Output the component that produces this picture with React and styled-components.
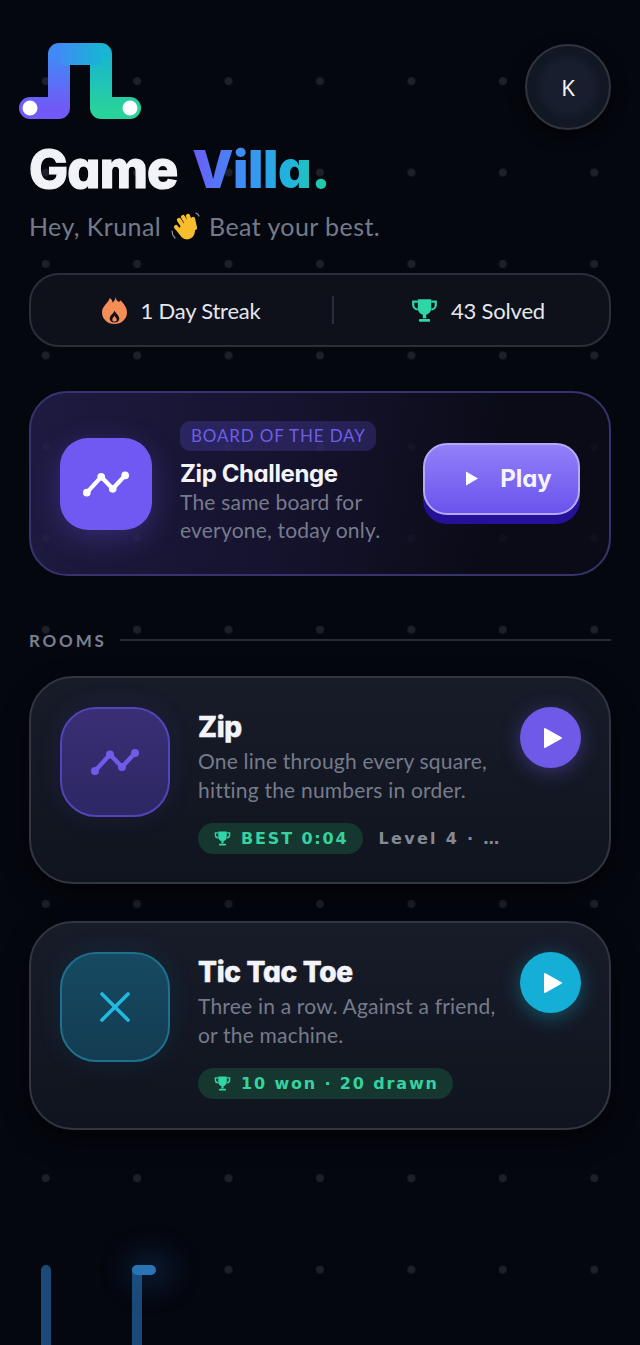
import styled, { createGlobalStyle } from "styled-components";

const GlobalStyle = createGlobalStyle`
  html, body {
    margin: 0;
    padding: 0;
    background: #05070f;
  }
  * {
    box-sizing: border-box;
  }
`;

const BODY_FONT = `Lato, "Noto Sans", sans-serif`;
const HEAD_FONT = `Inter, "Noto Sans", sans-serif`;

const Page = styled.div`
  position: relative;
  width: 640px;
  height: 1345px;
  overflow: hidden;
  padding: 43px 29px 0;
  font-family: ${BODY_FONT};
  background-color: #05070f;
  background-image: radial-gradient(circle, #1d2029 0, #1d2029 3.5px, transparent 4.5px);
  background-size: 91.43px 91.43px;
  background-position: 0 -56px;
`;

const Header = styled.header`
  display: flex;
  justify-content: space-between;
  align-items: flex-start;
  height: 98px;
`;

const Logo = styled.svg`
  display: block;
  width: 124px;
  height: 78px;
  margin-left: -11px;
`;

const Avatar = styled.div`
  display: flex;
  align-items: center;
  justify-content: center;
  width: 86px;
  height: 86px;
  margin-top: 1px;
  border-radius: 50%;
  border: 2px solid #30343f;
  background: radial-gradient(circle, #181e2d 0, #181e2d 24px, #121724 34px);
  box-shadow: 0 6px 16px rgba(0, 0, 0, 0.6);
  color: #f2f4f8;
  font-size: 22px;
  font-family: "Noto Sans", sans-serif;
`;

const Title = styled.h1`
  margin: 0;
  height: 58px;
  font-family: ${HEAD_FONT};
  font-size: 52px;
  line-height: 58px;
  font-weight: 800;
  letter-spacing: -0.8px;
  font-feature-settings: "cv11";
  -webkit-text-stroke: 1.2px currentColor;
  color: #f1f3f8;
`;

const TitleAccent = styled.span`
  margin-left: 4px;
  background: linear-gradient(90deg, #6c5cf6 0%, #3f8cf5 35%, #1fb4dc 70%, #22cfa0 100%);
  -webkit-background-clip: text;
  background-clip: text;
  color: transparent;
  font-weight: 900;
  letter-spacing: -0.4px;
  -webkit-text-stroke: 0;
`;

const Greeting = styled.p`
  display: flex;
  align-items: center;
  gap: 9px;
  height: 36px;
  margin: 9px 0 0;
  font-size: 25px;
  letter-spacing: 0.42px;
  color: #747a8a;
`;

const Stats = styled.section`
  display: grid;
  grid-template-columns: 301px 2px 1fr;
  align-items: center;
  height: 74px;
  margin-top: 29px;
  border-radius: 30px;
  border: 2px solid #2b2f3a;
  background: #0e111a;
`;

const Stat = styled.div`
  display: flex;
  align-items: center;
  justify-content: center;
  gap: 13px;
  padding-left: ${(p) => p.$shift || 0}px;
  font-size: 22px;
  letter-spacing: -0.2px;
  color: #e4e7ee;
`;

const StatDivider = styled.div`
  width: 2px;
  height: 28px;
  background: #2b2f3a;
`;

const Daily = styled.section`
  display: flex;
  align-items: center;
  height: 185px;
  margin-top: 44px;
  padding: 0 29px;
  border-radius: 38px;
  border: 2px solid #38336f;
  background: linear-gradient(100deg, rgba(36, 31, 78, 0.8) 0%, rgba(24, 21, 50, 0.78) 50%, rgba(11, 12, 24, 0.8) 80%);
`;

const DailyTile = styled.div`
  display: flex;
  align-items: center;
  justify-content: center;
  flex: none;
  width: 92px;
  height: 92px;
  border-radius: 28px;
  background: #7059f2;
  box-shadow: 0 8px 30px rgba(112, 89, 242, 0.3);
`;

const DailyBody = styled.div`
  flex: 1;
  min-width: 0;
  margin: 0 0 2px 28px;
`;

const Badge = styled.div`
  width: fit-content;
  height: 30px;
  padding: 0 10px 0 11px;
  border-radius: 10px;
  background: rgba(108, 92, 246, 0.22);
  color: #6d5ee8;
  font-size: 17px;
  line-height: 30px;
  letter-spacing: 0.85px;
  white-space: nowrap;
`;

const DailyTitle = styled.h2`
  margin: 5px 0 -4px;
  font-family: ${HEAD_FONT};
  font-size: 24px;
  line-height: 36px;
  font-weight: 700;
  letter-spacing: -0.4px;
  font-feature-settings: "cv11";
  color: #f3f4fa;
  white-space: nowrap;
`;

const Desc = styled.p`
  margin: 0;
  font-size: 21px;
  line-height: 28.5px;
  letter-spacing: 0.2px;
  color: #767b8c;
  white-space: nowrap;
`;

const PlayButton = styled.button`
  display: flex;
  align-items: center;
  justify-content: center;
  gap: 21px;
  flex: none;
  width: 157px;
  height: 72px;
  padding: 0 0 0 14px;
  margin-top: -10px;
  border: 2px solid #b5a7fb;
  border-radius: 24px;
  background: linear-gradient(180deg, #9180f8 0%, #6a54ee 100%);
  box-shadow: 0 9px 0 #25109a;
  color: #f6f5ff;
  font-family: ${HEAD_FONT};
  font-size: 24px;
  font-weight: 700;
  font-feature-settings: "cv11";
`;

const Triangle = styled.svg`
  display: block;
  flex: none;
  fill: #fff;
`;

const SectionHead = styled.div`
  display: flex;
  align-items: center;
  gap: 13px;
  height: 24px;
  margin-top: 52px;
  color: #7a8090;
  font-size: 17px;
  font-weight: 700;
  letter-spacing: 2.8px;
`;

const SectionLine = styled.div`
  flex: 1;
  height: 2px;
  background: #272b37;
`;

const RoomList = styled.div`
  display: flex;
  flex-direction: column;
  gap: 37px;
  margin-top: 24px;
`;

const Room = styled.article`
  display: flex;
  align-items: flex-start;
  height: ${(p) => p.$height}px;
  padding: 29px 28px 0 29px;
  border-radius: 44px;
  border: 2px solid #323641;
  background: linear-gradient(180deg, #181c29 0%, #10141e 100%);
  box-shadow: 0 10px 24px rgba(0, 0, 0, 0.55);
`;

const RoomTile = styled.div`
  display: flex;
  align-items: center;
  justify-content: center;
  flex: none;
  width: 110px;
  height: 110px;
  border-radius: 36px;
  border: 2px solid ${(p) => p.$border};
  background: ${(p) => p.$bg};
  box-shadow: 0 0 26px ${(p) => p.$glow};
`;

const RoomBody = styled.div`
  flex: 1;
  min-width: 0;
  margin-left: 28px;
`;

const RoomTitle = styled.h3`
  margin: 0;
  font-family: ${HEAD_FONT};
  font-size: 28px;
  line-height: 40px;
  font-weight: 800;
  letter-spacing: -0.3px;
  font-feature-settings: "cv11";
  -webkit-text-stroke: 0.5px currentColor;
  color: #f3f4fa;
`;

const RoomMeta = styled.div`
  display: flex;
  align-items: center;
  gap: 16px;
  margin-top: 19px;
`;

const Pill = styled.div`
  display: inline-flex;
  align-items: center;
  gap: 10px;
  height: 31px;
  padding: 0 14px 0 16px;
  border-radius: 16px;
  background: #15372f;
  color: #34d3a0;
  font-family: "DejaVu Sans", sans-serif;
  font-size: 16px;
  font-weight: 700;
  letter-spacing: 1.85px;
  white-space: nowrap;
`;

const Level = styled.span`
  color: #848a99;
  font-family: "DejaVu Sans", sans-serif;
  font-size: 16px;
  font-weight: 700;
  letter-spacing: 2.3px;
  white-space: nowrap;
`;

const RoomPlay = styled.button`
  display: flex;
  align-items: center;
  justify-content: center;
  flex: none;
  width: 61px;
  height: 61px;
  padding: 0 0 0 4px;
  border: none;
  border-radius: 50%;
  background: ${(p) => p.$color};
  box-shadow: 0 4px 20px ${(p) => p.$glow};
`;

const Rail = styled.div`
  position: absolute;
  bottom: 0;
  left: ${(p) => p.$left}px;
  top: 1265px;
  width: 10px;
  border-radius: 5px 5px 0 0;
  background: #1b4a78;
`;

const RailHead = styled.div`
  position: absolute;
  left: 132px;
  top: 1265px;
  width: 24px;
  height: 10px;
  border-radius: 5px;
  background: #2a74b6;
  box-shadow: 6px 0 30px 10px rgba(30, 110, 190, 0.26);
`;

const ZigZag = ({ size, color }) => (
  <svg width={size} height={size} viewBox="0 0 48 48" fill="none">
    <polyline
      points="4,33 19,16.5 31,29 44,15"
      stroke={color}
      strokeWidth="4.4"
      strokeLinejoin="round"
      strokeLinecap="round"
    />
    <circle cx="4" cy="33" r="4" fill={color} />
    <circle cx="19" cy="16.5" r="4" fill={color} />
    <circle cx="31" cy="29" r="4" fill={color} />
    <circle cx="44" cy="15" r="4" fill={color} />
  </svg>
);

const Trophy = ({ size, color }) => (
  <svg width={size} height={size} viewBox="0 0 24 24" fill="none">
    <path d="M6 2h12v8a6 6 0 0 1-12 0z" fill={color} />
    <path d="M6 4H2v3a4 4 0 0 0 4 4M18 4h4v3a4 4 0 0 1-4 4" stroke={color} strokeWidth="2" />
    <path d="M10.5 15h3v4h-3z" fill={color} />
    <rect x="7" y="19.5" width="10" height="2.5" rx="1" fill={color} />
  </svg>
);

const Flame = () => (
  <svg width="25" height="27" viewBox="0 0 26 28">
    <path
      d="M14 0c1 4 3 6 5 4 0-1 0-1 0-1 4 4 7 8 7 13 0 7-6 12-13 12S0 23 0 16C0 9 7 6 8 1c2 1 3 3 3 5 2-2 3-4 3-6z"
      fill="#f58d57"
    />
    <path d="M13 14c1 3 5 5 5 8.500 0 2.500-2 4-5 4s-5-1.500-5-4c0-3.500 4-5 5-8.500z" fill="#141018" />
    <path d="M13 19.500c.7 1.500 2.300 2.500 2.300 4 0 1.200-1 2-2.300 2s-2.300-.8-2.300-2c0-1.500 1.600-2.500 2.300-4z" fill="#f58d57" />
  </svg>
);

const Wave = () => (
  <svg width="30" height="30" viewBox="0 0 30 30" fill="none">
    <g stroke="#f8bd2d" strokeWidth="4.200" strokeLinecap="round">
      <path d="M9 9l6 9M13 6l6 10M18 5l4 11M23 8l2 9M6 16l5 6" />
    </g>
    <ellipse cx="17" cy="20" rx="8" ry="8.500" fill="#f8bd2d" />
    <path d="M2 20q0 4 3 7M26 2q2 1 3 3" stroke="#8d92a0" strokeWidth="1.200" strokeLinecap="round" />
  </svg>
);

const App = () => {
  return (
    <>
      <GlobalStyle />
      <Page>
        <Header>
          <Logo viewBox="0 0 124 78" fill="none">
            <defs>
              <linearGradient id="logoLeft" gradientUnits="userSpaceOnUse" x1="0" y1="66" x2="0" y2="10">
                <stop offset="0" stopColor="#7059f6" />
                <stop offset="1" stopColor="#3f8cf6" />
              </linearGradient>
              <linearGradient id="logoTop" gradientUnits="userSpaceOnUse" x1="41" y1="0" x2="83" y2="0">
                <stop offset="0" stopColor="#3f8cf6" />
                <stop offset="1" stopColor="#18b4d4" />
              </linearGradient>
              <linearGradient id="logoRight" gradientUnits="userSpaceOnUse" x1="0" y1="10" x2="0" y2="66">
                <stop offset="0" stopColor="#18b4d4" />
                <stop offset="1" stopColor="#27d29c" />
              </linearGradient>
            </defs>
            <path d="M12 65H41V11" stroke="url(#logoLeft)" strokeWidth="22" strokeLinecap="round" strokeLinejoin="round" />
            <path d="M83 11V65H112" stroke="url(#logoRight)" strokeWidth="22" strokeLinecap="round" strokeLinejoin="round" />
            <path d="M41 11H83" stroke="url(#logoTop)" strokeWidth="22" />
            <circle cx="12" cy="65" r="7.500" fill="#fff" />
            <circle cx="112" cy="65" r="7.500" fill="#fff" />
          </Logo>
          <Avatar>K</Avatar>
        </Header>

        <Title>
          Game <TitleAccent>Villa.</TitleAccent>
        </Title>
        <Greeting>
          Hey, Krunal <Wave /> Beat your best.
        </Greeting>

        <Stats>
          <Stat>
            <Flame />
            1 Day Streak
          </Stat>
          <StatDivider />
          <Stat $shift={13}>
            <Trophy size={27} color="#2fd6a6" />
            43 Solved
          </Stat>
        </Stats>

        <Daily>
          <DailyTile>
            <ZigZag size={46} color="#fff" />
          </DailyTile>
          <DailyBody>
            <Badge>BOARD OF THE DAY</Badge>
            <DailyTitle>Zip Challenge</DailyTitle>
            <Desc>
              The same board for
              <br />
              everyone, today only.
            </Desc>
          </DailyBody>
          <PlayButton>
            <Triangle width="14" height="17" viewBox="0 0 14 16">
              <path d="M1 1l12 7-12 7z" />
            </Triangle>
            Play
          </PlayButton>
        </Daily>

        <SectionHead>
          ROOMS
          <SectionLine />
        </SectionHead>

        <RoomList>
          <Room $height={208}>
            <RoomTile $border="#5345b8" $bg="linear-gradient(180deg, #3a2f75, #2d2764)" $glow="rgba(90, 70, 220, 0.12)">
              <ZigZag size={48} color="#6f5bea" />
            </RoomTile>
            <RoomBody>
              <RoomTitle>Zip</RoomTitle>
              <Desc>
                One line through every square,
                <br />
                hitting the numbers in order.
              </Desc>
              <RoomMeta>
                <Pill>
                  <Trophy size={17} color="#2fd6a6" />
                  BEST 0:04
                </Pill>
                <Level>Level 4 · …</Level>
              </RoomMeta>
            </RoomBody>
            <RoomPlay $color="#6f5ae8" $glow="rgba(111, 90, 232, 0.4)">
              <Triangle width="20" height="22" viewBox="0 0 20 22">
                <path d="M2 2l16 9-16 9z" stroke="#fff" strokeWidth="2" strokeLinejoin="round" />
              </Triangle>
            </RoomPlay>
          </Room>

          <Room $height={209}>
            <RoomTile $border="#1f708c" $bg="linear-gradient(180deg, #164a62, #133c52)" $glow="rgba(20, 150, 200, 0.12)">
              <svg width="32" height="32" viewBox="0 0 32 32" fill="none">
                <path d="M3 3l26 26M29 3L3 29" stroke="#23b9de" strokeWidth="3.600" strokeLinecap="round" />
              </svg>
            </RoomTile>
            <RoomBody>
              <RoomTitle>Tic Tac Toe</RoomTitle>
              <Desc>
                Three in a row. Against a friend,
                <br />
                or the machine.
              </Desc>
              <RoomMeta>
                <Pill>
                  <Trophy size={17} color="#2fd6a6" />
                  10 won · 20 drawn
                </Pill>
              </RoomMeta>
            </RoomBody>
            <RoomPlay $color="#14aed6" $glow="rgba(20, 174, 214, 0.4)">
              <Triangle width="20" height="22" viewBox="0 0 20 22">
                <path d="M2 2l16 9-16 9z" stroke="#fff" strokeWidth="2" strokeLinejoin="round" />
              </Triangle>
            </RoomPlay>
          </Room>
        </RoomList>

        <Rail $left={41} />
        <Rail $left={132} />
        <RailHead />
      </Page>
    </>
  );
};

export default App;
